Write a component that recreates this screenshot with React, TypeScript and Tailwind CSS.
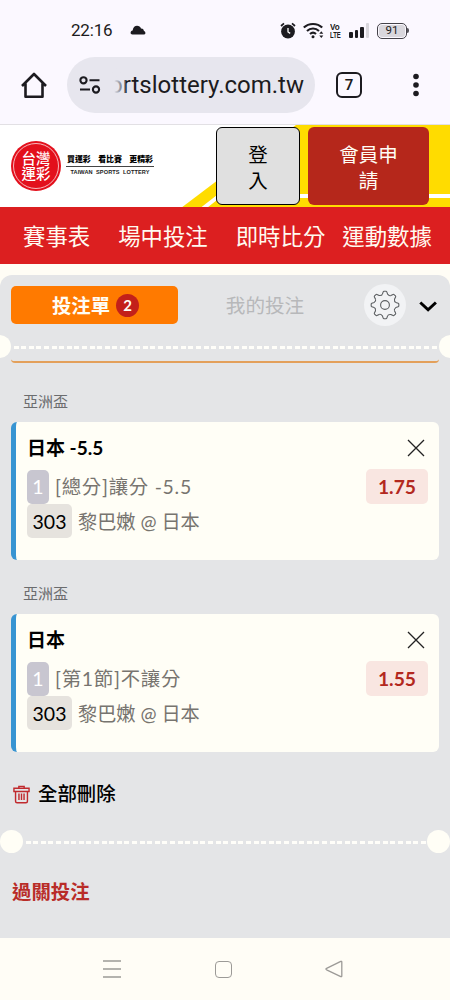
import { useState } from 'react'

const navItems = [
  { label: '賽事表', className: 'ml-[23px]' },
  { label: '場中投注', className: 'ml-[28px]' },
  { label: '即時比分', className: 'ml-[28px]' },
  { label: '運動數據', className: 'ml-[17px]' },
]

const initialBets = [
  { id: 1, league: '亞洲盃', pick: '日本 -5.5', count: 1, market: '[總分]讓分 -5.5', code: 303, match: '黎巴嫩 @ 日本', odds: '1.75' },
  { id: 2, league: '亞洲盃', pick: '日本', count: 1, market: '[第1節]不讓分', code: 303, match: '黎巴嫩 @ 日本', odds: '1.55' },
]

function StatusBar() {
  return (
    <div className="flex h-[57px] items-center pt-1 pl-[71px] font-['Roboto',sans-serif] text-[#1c1b20]">
      <span className="w-[42px] text-[17px] leading-none tracking-[-0.2px]">22:16</span>
      <svg className="ml-[17px] mt-[-2px] h-[10px] w-4" viewBox="0 0 16 10" fill="currentColor">
        <path d="M2.4 9.5C-.2 9.3.2 5.8 2.6 5.4 3.2 2.2 5 .8 7 .8c2 0 3.4 1 4 2.6 2.6.2 2.8 1.6 2.9 2.6 1.9.6 2 3.200.3 3.500z" />
      </svg>
      <svg className="ml-[134px] h-[17px] w-[16px]" viewBox="0 0 16 17" fill="none" stroke="currentColor">
        <circle cx="8" cy="9.5" r="6.9" fill="currentColor" stroke="none" />
        <path d="M1 4 4 1.3M15 4l-3-2.7" strokeWidth="1.7" />
        <path d="M8 6v4l2.2 1.4" stroke="#fff" strokeWidth="1.3" />
      </svg>
      <svg className="ml-[7px] h-[17px] w-[21px]" viewBox="0 0 21 17" fill="none" stroke="currentColor" strokeWidth="2.1">
        <path d="M.8 5.6C5.7.7 14.3.7 19.2 5.6M4 9c3.4-3.3 8.6-3.3 12 0M7 12c2-1.9 4-1.9 6 0" />
        <circle cx="10" cy="14.8" r="1.5" fill="currentColor" stroke="none" />
        <path d="m18.3 9.3 2 2.4h-4zM18.3 16l2-2.4h-4z" fill="currentColor" stroke="none" />
      </svg>
      <div className="ml-[6px] w-[12px] font-['Liberation_Sans',sans-serif] text-[8.5px] leading-[8px] font-bold">
        <div className="origin-left scale-x-[0.95]">Vo</div>
        <div className="origin-left scale-x-[0.7]">LTE</div>
      </div>
      <div className="ml-[7px] flex h-[15px] w-[20px] items-end gap-[2px]">
        <span className="h-[6px] w-[3.5px] rounded-[1px] bg-[#1c1b20]" />
        <span className="h-[8px] w-[3.5px] rounded-[1px] bg-[#1c1b20]" />
        <span className="h-[11px] w-[3.5px] rounded-[1px] bg-[#1c1b20]" />
        <span className="h-[15px] w-[3.5px] rounded-[1px] bg-[#d8d6dc]" />
      </div>
      <div className="ml-[8px] flex h-[16px] w-[30px] items-center justify-center rounded-[5px] border border-[#444249] p-px">
        <span className="flex h-full w-full items-center justify-center rounded-[3px] bg-[#d9d7dd] text-[11.5px] leading-none">91</span>
      </div>
      <span className="h-[5px] w-[2px] rounded-r bg-[#55535a]" />
    </div>
  )
}

function AddressBar() {
  return (
    <div className="flex h-[68px] items-start border-b border-[#e2e0e4] pl-[21px] text-[#1c1b20]">
      <svg className="mt-[15px] h-[27px] w-[26px]" viewBox="0 0 26 27" fill="none" stroke="currentColor" strokeWidth="2.6" strokeLinejoin="round">
        <path d="M1 14 13 2l12 12M4.5 11.5v13.2h17V11.5" />
      </svg>
      <div className="ml-[20px] flex h-[56px] w-[248px] items-center rounded-full bg-[#e7e6ee] pl-[12px]">
        <svg className="h-[18px] w-[22px]" viewBox="0 0 22 18" fill="none" stroke="currentColor" strokeWidth="2.1">
          <circle cx="4.5" cy="4.3" r="3.1" />
          <circle cx="17" cy="13.5" r="3.1" />
          <path d="M10.5 4.3h10M1 13.5h10" />
        </svg>
        <span className="relative ml-[11px] flex h-9 w-[192px] items-center justify-end font-['Roboto',sans-serif] text-[24px] whitespace-nowrap">
          <span>ortslottery.com.tw</span>
          <span className="absolute inset-y-0 left-[-4px] w-[18px] bg-gradient-to-r from-[#e7e6ee] from-35% to-[#e7e6ee]/20" />
        </span>
      </div>
      <div className="mt-[15px] ml-[21px] flex h-[26px] w-[26px] items-center justify-center rounded-[6px] border-[2.5px] border-[#1c1b20] font-['Roboto',sans-serif] text-[15px] leading-none font-semibold">
        7
      </div>
      <svg className="mt-[16px] ml-[50px] h-[24px] w-[8px]" viewBox="0 0 8 24" fill="currentColor">
        <circle cx="4" cy="3.5" r="2.8" />
        <circle cx="4" cy="12" r="2.8" />
        <circle cx="4" cy="20.5" r="2.8" />
      </svg>
    </div>
  )
}

function SiteHeader() {
  return (
    <header className="relative flex h-[82px] items-start bg-white pl-[11px]">
      <svg className="absolute inset-0 h-full w-full" viewBox="0 0 450 82">
        <path d="M181 83 216 56.5 296 0H450V83Z" fill="#ffdc00" />
        <path d="M201 85 219 71H450" fill="none" stroke="#fff" strokeWidth="4" />
      </svg>
      <div className="relative mt-[16px] flex h-[50px] w-[50px] items-center justify-center rounded-full bg-[#e3101c]">
        <div className="absolute inset-[2px] rounded-full border border-white/70" />
        <div className="flex flex-col text-center text-[14.5px] font-medium text-white">
          <span className="leading-[15px]">台灣</span>
          <span className="leading-[15px]">運彩</span>
        </div>
      </div>
      <div className="relative mt-[29px] ml-[5px] w-[88px]">
        <div className="flex justify-between border-b border-[#444] px-[1px] pb-[2px] text-[7.9px] leading-[10px] font-black text-black">
          <span>買運彩</span>
          <span>看比賽</span>
          <span>更精彩</span>
        </div>
        <div className="pt-[2px] text-center font-['Liberation_Sans',sans-serif] text-[5.6px] leading-[7px] font-bold tracking-[0.1px] whitespace-nowrap text-[#222]">
          TAIWAN&nbsp; SPORTS&nbsp; LOTTERY
        </div>
      </div>
      <button className="relative mt-[2px] ml-[62px] h-[78px] w-[84px] rounded-[6px] border border-black bg-[#e0e0e0] px-[30px] pt-[3px] text-[19.5px] leading-[26px] text-black">
        登入
      </button>
      <button className="relative mt-[2px] ml-[8px] h-[78px] w-[121px] rounded-[6px] bg-[#b5271b] px-[30px] pt-[3px] text-[19.5px] leading-[26px] text-[#fffdf5]">
        會員申請
      </button>
    </header>
  )
}

function GearIcon() {
  return (
    <svg className="h-[30px] w-[30px]" viewBox="-15 -15 30 30" fill="none" stroke="#5c5f62" strokeWidth="1.1" strokeLinejoin="round">
      {/* one tooth and the valley after it, repeated around the hub */}
      {[0, 45, 90, 135, 180, 225, 270, 315].map((angle) => (
        <path key={angle} transform={`rotate(${angle})`} d="M-2.6-10.8-1.8-13.2Q-1.6-13.8-1-13.8H1Q1.6-13.8 1.8-13.2L2.6-10.8Q4.2-8.8 5.8-9.48" />
      ))}
      <circle r="4.4" />
    </svg>
  )
}

function Divider({ inset }: { inset?: boolean }) {
  return (
    <div className={`flex h-[23px] shrink-0 items-center justify-between ${inset ? '' : '-mx-3'}`}>
      <span className="h-[23px] w-[23px] shrink-0 rounded-full bg-[#fffef6]" />
      <span className="mt-[2px] h-[2.5px] flex-1 bg-[repeating-linear-gradient(90deg,transparent_0_2.6px,#fffef9_2.6px_7.6px)]" />
      <span className="h-[23px] w-[23px] shrink-0 rounded-full bg-[#fffef6]" />
    </div>
  )
}

function BetCard({ bet, onRemove }: { bet: typeof initialBets[0]; onRemove: () => void }) {
  return (
    <section className="px-[11px]">
      <h3 className="pl-3 text-[15px] leading-[22px] text-[#6b6c6e]">{bet.league}</h3>
      <div className="mt-[10px] h-[138px] rounded-[6px] border-l-[5px] border-[#3794d2] bg-[#fffef6] pt-[12px] pr-[11px] pl-[11px]">
        <div className="flex h-[28px] items-center justify-between">
          <span className="pt-px text-[19px] font-bold text-black">{bet.pick}</span>
          <button onClick={onRemove} aria-label="remove">
            <svg className="mr-[3px] h-[18px] w-[18px]" viewBox="0 0 18 18" stroke="#222" strokeWidth="1.3">
              <path d="m1 1 16 16M17 1 1 17" />
            </svg>
          </button>
        </div>
        <div className="mt-[7px] flex h-[35px] items-center">
          <span className="flex h-[34px] w-[22px] items-center justify-center rounded-[5px] bg-[#c8c6d0] text-[19.5px] text-white">{bet.count}</span>
          <span className="ml-[6px] pt-px text-[19.4px] tracking-[0.75px] whitespace-nowrap text-[#77746f]">{bet.market}</span>
          <span className="ml-auto flex h-[35px] w-[62px] items-center justify-center rounded-[5px] bg-[#f9e6e1] pt-px text-[19.3px] font-bold text-[#b3281e]">{bet.odds}</span>
        </div>
        <div className="flex h-[34px] items-center">
          <span className="flex h-[34px] w-[45px] items-center justify-center rounded-[5px] bg-[#e6e3de] pt-px text-[19.5px] text-black">{bet.code}</span>
          <span className="ml-[6px] pt-[2px] text-[19.2px] whitespace-nowrap text-[#77746f]">{bet.match}</span>
        </div>
      </div>
    </section>
  )
}

export default function App() {
  const [bets, setBets] = useState(initialBets)

  return (
    <div className="flex h-[1000px] w-[450px] flex-col overflow-hidden bg-[#fffdf5] font-['Lato','Noto_Sans_CJK_TC',sans-serif]">
      <div className="bg-[#fbf8ff]">
        <StatusBar />
        <AddressBar />
      </div>
      <SiteHeader />
      <nav className="flex h-[57px] items-center bg-[#dc1f20] pt-[3px] text-[22.4px] whitespace-nowrap text-[#fffaf0]">
        {navItems.map((item) => (
          <a key={item.label} className={item.className}>{item.label}</a>
        ))}
      </nav>

      {/* Bet slip */}
      <main className="mt-[11px] flex h-[663px] flex-col overflow-hidden rounded-t-[12px] bg-[#e4e5e7]">
        <div className="flex h-[60px] shrink-0 items-center pl-[11px]">
          <button className="flex h-[38px] w-[167px] items-center justify-center gap-[6px] rounded-[5px] bg-[#ff7a00] pl-[2px] text-[19.4px] font-bold text-[#fffdf5]">
            <span className="pt-px">投注單</span>
            <span className="flex h-[23px] w-[23px] items-center justify-center rounded-full bg-[#c3201a] text-[15px] leading-none">{bets.length}</span>
          </button>
          <button className="ml-[47px] w-[80px] pt-[2px] text-[19.6px] whitespace-nowrap text-[#b7b8ba]">我的投注</button>
          <button className="ml-[59px] flex h-[42px] w-[42px] items-center justify-center rounded-full bg-[#f2f3f5]" aria-label="settings">
            <GearIcon />
          </button>
          <svg className="mt-[2px] ml-[13px] h-[11px] w-[18px]" viewBox="0 0 18 11" fill="none" stroke="#000" strokeWidth="3">
            <path d="m1.3 1.5 7.8 7.3 7.8-7.3" />
          </svg>
        </div>

        <Divider />
        <div className="mx-[11px] mt-px h-[4px] shrink-0 rounded-b-[6px] border-b-2 border-[#e3a05b]" />

        <div className="mt-[27px] flex flex-col gap-[22px]">
          {bets.map((bet) => (
            <BetCard key={bet.id} bet={bet} onRemove={() => setBets(bets.filter((b) => b.id !== bet.id))} />
          ))}
        </div>

        <button onClick={() => setBets([])} className="mt-[28px] ml-[13px] flex h-[28px] shrink-0 items-center gap-[8px] text-[19.4px] font-medium text-black">
          <svg className="h-[19px] w-[17px]" viewBox="0 0 18 20" fill="none" stroke="#c02a2e" strokeWidth="1.5">
            <path d="M1 6.8V3.4h16v3.4zM6.2 3.2V1.4h5.6v1.8M2.7 6.8v10.4q0 1.6 1.6 1.6h9.4q1.6 0 1.6-1.6V6.8M6.3 9v6.8M9 9v6.8M11.7 9v6.8" />
          </svg>
          全部刪除
        </button>
        <div className="mt-[22px]">
          <Divider inset />
        </div>
        <h2 className="mt-[25px] ml-[12px] text-[19.4px] leading-[28px] font-bold text-[#b92c28]">過關投注</h2>
      </main>

      {/* System navigation */}
      <footer className="flex h-[62px] items-center bg-[#fffdf6] pl-[103px]">
        <svg className="h-[18px] w-[18px]" viewBox="0 0 18 18" stroke="#9c9a97" strokeWidth="1.3">
          <path d="M0 1h18M0 9h18M0 17h18" />
        </svg>
        <span className="ml-[94px] h-[17px] w-[17px] rounded-[4px] border-[1.3px] border-[#9c9a97]" />
        <svg className="ml-[93px] h-[18px] w-[18px]" viewBox="0 0 18 18" fill="none" stroke="#9c9a97" strokeWidth="1.3" strokeLinejoin="round">
          <path d="M16.8 2v14q0 1-1 .6L1.6 9.8q-1.3-.8 0-1.5L15.8 1.4q1-.4 1 .6z" />
        </svg>
      </footer>
    </div>
  )
}
